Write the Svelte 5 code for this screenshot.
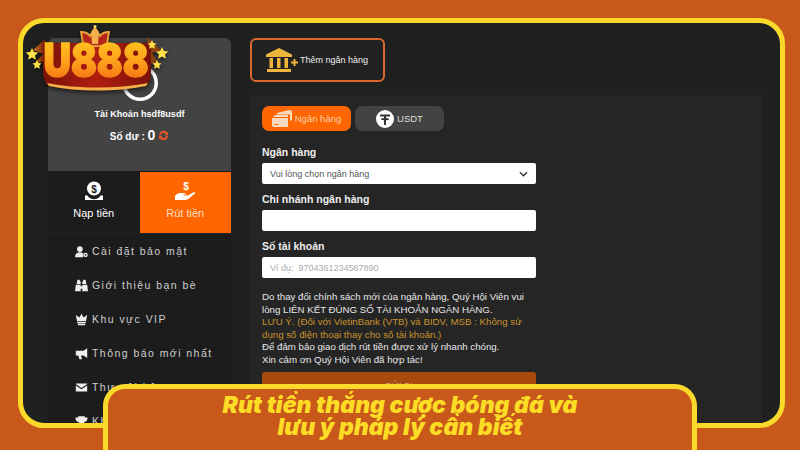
<script>
	const menu = [
		{ label: 'Cài đặt bảo mật', d: 'M6 1.500a3.500 3.500 0 1 1 0 7 3.500 3.500 0 0 1 0-7zM0 15c0-4 2.500-6 6-6 1.700 0 3 .4 4 1.200V15zM13 9.500a2.700 2.700 0 1 1 0 5.400 2.700 2.700 0 0 1 0-5.400zm0 1.700a1 1 0 1 0 0 2 1 1 0 0 0 0-2z' },
		{ label: 'Giới thiệu bạn bè', d: 'M3 1h2.500l1 2.500L7 2.500V6H2zM10.500 1H13l1 5H9V2.500l.5 1zM1 7h6v8H0zM9 7h6l1 8H9zM7 9h2v3H7z' },
		{ label: 'Khu vực VIP', d: 'M8 1l2.500 4.500L15 2.500 13.500 10h-11L1 2.500l4.500 3zM2.500 11h11v1.200h-11zM3.500 13h9v2h-9z' },
		{ label: 'Thông báo mới nhất', d: 'M15 1.500v12l-4.500-3H7.500l1 4.500h-3L4 10.500H1v-6h9.500z' },
		{ label: 'Thư nội bộ', d: 'M1 3h14v.8L8 8.500 1 3.800zM1 5.500V13h14V5.500L8 10.200z' },
		{ label: 'Khuyến mãi', d: 'M4 1.500h8V3h3.500c0 3-1.200 5-3.800 5.500A4 4 0 0 1 9 10.500V12h2.500v2.500h-7V12H7v-1.500a4 4 0 0 1-2.700-2C1.700 8 .5 6 .5 3H4z' }
	]
	const lines = ['Do thay đổi chính sách mới của ngân hàng, Quý Hội Viên vui', 'lòng LIÊN KẾT ĐÚNG SỐ TÀI KHOẢN NGÂN HÀNG.']
</script>

<div class="frame">
	<aside>
		<div class="profile">
			<svg class="avatar" viewBox="0 0 36 36" width="36" height="36">
				<circle cx="18" cy="18" r="18" fill="#fff" />
				<circle cx="18" cy="18" r="14.500" fill="#434343" />
				<ellipse cx="18" cy="12" rx="9" ry="8" fill="#fff" />
				<ellipse cx="19" cy="23.500" rx="8" ry="3.500" fill="#434343" />
			</svg>
			<p class="account">Tài Khoản hsdf8usdf</p>
			<p class="balance">
				Số dư : <b>0</b>
				<svg viewBox="0 0 12 12" width="11" height="11">
					<path d="M1 5.500a5 5 0 0 1 8.700-3L11 1.500v4.300H6.800l1.500-1.400A3 3 0 0 0 3 5.500zM11 6.500a5 5 0 0 1-8.700 3L1 10.500V6.200h4.200L3.700 7.600A3 3 0 0 0 9 6.500z" fill="#e2552a" />
				</svg>
			</p>
		</div>

		<div class="actions">
			<div class="action">
				<svg viewBox="0 0 20 20" width="20" height="20">
					<circle cx="10" cy="7.500" r="7" fill="#fff" />
					<text x="10" y="11.500" class="dollar">$</text>
					<path d="M1 14.500h2.500a7.500 7.500 0 0 0 13 0H19V19H1z" fill="#fff" />
				</svg>
				<span>Nạp tiền</span>
			</div>
			<div class="action active">
				<svg viewBox="0 0 22 20" width="22" height="20">
					<text x="12" y="8.500" class="dollar light">$</text>
					<path d="M1 14.500l4-2.500h5l3 1.500h-3.500v1H14l6-3.500 1.500 1L15 17.500l-3 1.500H1z" fill="#fff" />
				</svg>
				<span>Rút tiền</span>
			</div>
		</div>

		<ul>
			{#each menu as item}
				<li>
					<svg viewBox="0 0 16 16" width="13" height="13"><path d={item.d} fill="#eee" /></svg>
					{item.label}
				</li>
			{/each}
		</ul>
	</aside>

	<main>
		<div class="add-bank">
			<svg viewBox="0 0 32 24" width="32" height="24">
				<path d="M13 0L26 6.500V9H0V6.500zM1 21h24v3H1zM3.500 10h3.500v10H3.500zM11 10h3.500v10H11zM18.500 10h3.500v10h-3.500z" fill="#eeb53c" />
				<path d="M25 13.500h2.500V11h2v2.500H32v2h-2.500V18h-2v-2.500H25z" fill="#eeb53c" />
			</svg>
			<span>Thêm ngân hàng</span>
		</div>

		<section>
			<div class="tabs">
				<div class="tab on">
					<svg viewBox="0 0 20 18" width="20" height="18">
						<path d="M5 3l12-3 3 1v9l-2 1V4.500H5zM3 5h13v2H1zM0 8h16v9H2a2 2 0 0 1-2-2zM2.500 14v1h4v-1z" fill="#f7d9c0" />
					</svg>
					Ngân hàng
				</div>
				<div class="tab">
					<svg viewBox="0 0 18 18" width="18" height="18">
						<circle cx="9" cy="9" r="9" fill="#fff" />
						<path d="M4 4.500h10v2H10v1.600l3 .6v1l-3 .6V15H8v-4.700l-3-.6v-1l3-.6V6.500H4z" fill="#333" />
					</svg>
					USDT
				</div>
			</div>

			<form>
				<label for="bank">Ngân hàng</label>
				<div class="select" id="bank">
					Vui lòng chọn ngân hàng
					<svg viewBox="0 0 10 6" width="9" height="6"><path d="M1 1l4 4 4-4" fill="none" stroke="#333" stroke-width="1.500" /></svg>
				</div>
				<label for="branch">Chi nhánh ngân hàng</label>
				<input id="branch" type="text" />
				<label for="number">Số tài khoản</label>
				<input id="number" type="text" placeholder="Ví dụ:  9704361234567890" />

				<p class="note">
					{#each lines as line}{line}<br />{/each}
					<span class="warn">LƯU Ý. (Đối với VietinBank (VTB) và BIDV, MSB : Không sử<br />dụng số điện thoại thay cho số tài khoản.)</span><br />
					Để đảm bảo giao dịch rút tiền được xử lý nhanh chóng.<br />
					Xin cảm ơn Quý Hội Viên đã hợp tác!
				</p>
				<button type="button">GỬI ĐI</button>
			</form>
		</section>
	</main>
</div>

<svg class="logo" viewBox="0 0 150 70" width="150" height="70">
	<defs>
		<linearGradient id="gold" x1="0" y1="0" x2="0" y2="1">
			<stop offset="0" stop-color="#ffd21e" />
			<stop offset="0.55" stop-color="#ff9f1c" />
			<stop offset="1" stop-color="#f0600f" />
		</linearGradient>
		<linearGradient id="band" x1="0" y1="0" x2="1" y2="0">
			<stop offset="0" stop-color="#7a1208" />
			<stop offset="0.5" stop-color="#b01e10" />
			<stop offset="1" stop-color="#7a1208" />
		</linearGradient>
		<linearGradient id="ray" x1="0" y1="0" x2="1" y2="0">
			<stop offset="0" stop-color="#c9761c" />
			<stop offset="1" stop-color="#6d1c08" />
		</linearGradient>
	</defs>
	<path d="M20 14L8 25l10 4-9 10 11-3z" fill="url(#ray)" />
	<path d="M122 12l14 13-9 3 8 12-10-2z" fill="#8a4212" />
	<path d="M18 18h108v24c0 10-1 15-5 19-30 6-68 6-97 0-5-3-6-9-6-19z" fill="url(#band)" />
	<path d="M22 58c30 6 70 6 101 0l-2 3c-30 6-68 6-97 0z" fill="#f2b04a" />
	<g fill="#ffe14a">
		<path d="M7 23l1.900 4 4.300.5-3.200 3 .9 4.300L7 32.600l-3.900 2.200.9-4.300-3.200-3 4.300-.5z" />
		<path d="M12 35l1.400 3 3.200.4-2.400 2.200.7 3.200-2.900-1.600-2.900 1.600.7-3.200-2.400-2.200 3.200-.4z" />
		<path d="M137 22l1.900 4 4.300.5-3.200 3 .9 4.300-3.900-2.200-3.900 2.200.9-4.300-3.200-3 4.300-.5z" />
		<path d="M132 35l1.400 3 3.200.4-2.400 2.200.7 3.200-2.900-1.600-2.900 1.600.7-3.200-2.400-2.200 3.200-.4z" />
		<path d="M127 15l1.400 3 3.200.4-2.400 2.200.7 3.200-2.900-1.600-2.900 1.600.7-3.200-2.400-2.200 3.200-.4z" />
	</g>
	<path d="M56 7c4 0 7 1 9 4l5-8 5 8c2-3 5-4 9-4l-2 12c-4 3-20 3-24 0z" fill="#b5261a" stroke="#eaa63c" stroke-width="1.800" />
	<path d="M66 7l4-5 4 5-1 12h-6z" fill="#f2b04a" />
	<circle cx="70" cy="1.500" r="1.500" fill="#ffd86a" />
	<text x="71" y="52" textLength="105" lengthAdjust="spacingAndGlyphs" class="brand">U888</text>
</svg>

<div class="banner">
	<h1>Rút tiền thắng cược bóng đá và<br />lưu ý pháp lý cần biết</h1>
</div>

<style>
	:global(body) {
		background: #c8591a;
		font-family: 'Liberation Sans', Arial, sans-serif;
		overflow: hidden;
		height: 450px;
	}

	.frame {
		box-sizing: border-box;
		width: 767px;
		height: 410px;
		margin: 18px 0 0 18px;
		padding: 15px 17px 0 25px;
		border: 5px solid #fbd92b;
		border-radius: 26px;
		background: #1f2020;
		display: flex;
		gap: 19px;
		overflow: hidden;
	}

	aside {
		width: 183px;
		flex: none;
		background: #1c1c1c;
		border-radius: 6px 6px 0 0;
	}

	.profile {
		height: 133px;
		box-sizing: border-box;
		padding-top: 27px;
		background: #434343;
		border-radius: 6px 6px 0 0;
		color: #fff;
		text-align: center;
		font-weight: bold;
	}

	.avatar {
		display: block;
		margin: 0 auto;
	}

	.account {
		margin: 8px 0 0;
		font-size: 9.1px;
	}

	.balance {
		margin: 8px 0 0;
		font-size: 10px;
	}

	.balance b {
		font-size: 14px;
	}

	.balance svg {
		vertical-align: -1px;
	}

	.actions {
		display: flex;
		margin-top: 1px;
		height: 61px;
		border-bottom: 1px solid #252525;
	}

	.action {
		flex: 1;
		display: flex;
		flex-direction: column;
		align-items: center;
		padding-top: 9px;
		box-sizing: border-box;
		gap: 6px;
		font-size: 11px;
		color: #fff;
	}

	.action.active {
		background: #ff6600;
		color: #ffdcc0;
	}

	.dollar {
		font: bold 10px 'Liberation Sans', sans-serif;
		text-anchor: middle;
		fill: #1c1c1c;
	}

	.dollar.light {
		fill: #fff;
	}

	ul {
		list-style: none;
		margin: 0;
		padding: 0 0 0 27px;
	}

	li {
		height: 34px;
		display: flex;
		align-items: center;
		gap: 4px;
		font-size: 10.5px;
		letter-spacing: 1.45px;
		color: #cfcfcf;
	}

	main {
		flex: 1;
		min-width: 0;
	}

	.add-bank {
		box-sizing: border-box;
		width: 135px;
		height: 44px;
		border: 2px solid #d9682c;
		border-radius: 6px;
		background: #212121;
		display: flex;
		align-items: center;
		padding-left: 14px;
		gap: 2px;
		font-size: 9px;
		color: #eee;
	}

	section {
		margin-top: 13px;
		height: 340px;
		padding: 11px 12px;
		box-sizing: border-box;
		background: #252525;
		border-radius: 4px;
	}

	.tabs {
		display: flex;
		gap: 4px;
	}

	.tab {
		width: 89px;
		height: 25px;
		border-radius: 7px;
		background: #434343;
		color: #ddd;
		font-size: 9.5px;
		display: flex;
		align-items: center;
		justify-content: center;
		gap: 3px;
	}

	.tab.on {
		background: #ff6600;
		color: #f7cfae;
	}

	form {
		width: 274px;
		margin-top: 15px;
		display: flex;
		flex-direction: column;
	}

	label {
		height: 11px;
		line-height: 13px;
		margin-bottom: 6px;
		font-size: 10.5px;
		font-weight: bold;
		color: #eee;
	}

	.select,
	input {
		box-sizing: border-box;
		height: 21px;
		width: 100%;
		margin: 0 0 9px;
		padding: 0 8px;
		border: 0;
		border-radius: 2px;
		background: #fff;
		font: 9px 'Liberation Sans', sans-serif;
		color: #555;
	}

	.select {
		display: flex;
		align-items: center;
		justify-content: space-between;
	}

	input::placeholder {
		color: #aaa;
	}

	.note {
		margin: 4px 0 0;
		font-size: 9.7px;
		line-height: 12.6px;
		white-space: nowrap;
		color: #e8e8e8;
	}

	.warn {
		color: #c8922c;
	}

	button {
		margin-top: 5px;
		height: 28px;
		border: 0;
		border-radius: 3px;
		background: #a84a0c;
		color: #d9a27a;
		font: 9px 'Liberation Sans', sans-serif;
	}

	.logo {
		position: absolute;
		left: 25px;
		top: 25px;
		overflow: visible;
		filter: drop-shadow(0 2px 2px rgba(0, 0, 0, 0.6));
	}

	.brand {
		font: 900 47px Inter, sans-serif;
		text-anchor: middle;
		fill: url(#gold);
		stroke: url(#gold);
		stroke-width: 1.6;
	}

	.banner {
		position: absolute;
		left: 103px;
		top: 384px;
		box-sizing: border-box;
		width: 594px;
		height: 66px;
		padding-top: 5px;
		border: 5px solid #fbd92b;
		border-bottom: 0;
		border-radius: 22px 22px 0 0;
		background: #c8591a;
	}

	h1 {
		margin: 0;
		text-align: center;
		font: italic 900 23px/22px Inter, sans-serif;
		color: #fddc26;
	}
</style>
